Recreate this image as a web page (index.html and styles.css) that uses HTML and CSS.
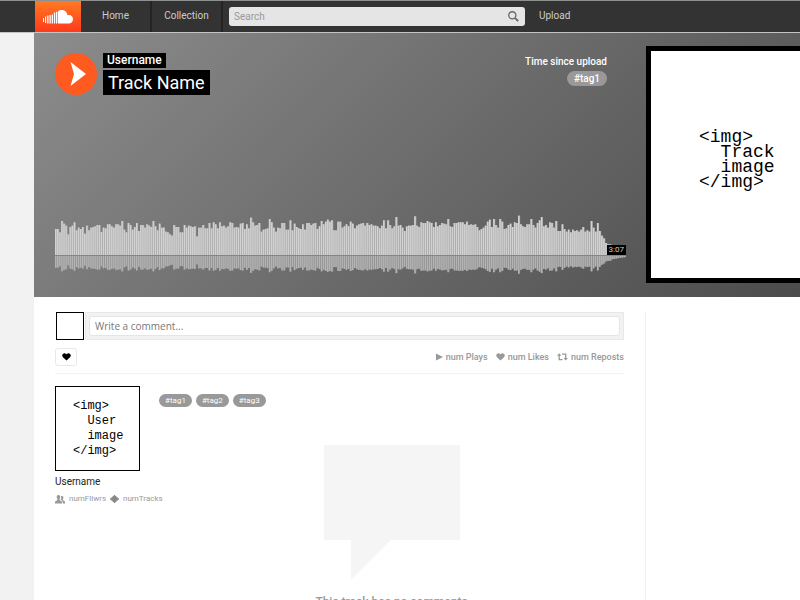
FILE: index.html
```html
<!DOCTYPE html>
<html lang="en">
<head>
<meta charset="utf-8">
<title>Track Name</title>
<link rel="stylesheet" href="styles.css">
</head>
<body>
<header class="topbar">
  <a class="logo" href="#" aria-label="Main page">
    <svg width="30" height="14" viewBox="0 0 30 14" fill="#fff" aria-hidden="true">
      <path d="M15 1.4C16 .5 17.300 0 18.800 0c3 0 5.300 2.200 5.700 5.200.4-.2.9-.3 1.500-.3 2.300 0 4 1.900 4 4.300 0 2.500-1.800 4.300-4 4.300H15z"/>
      <path d="M0 8h1v4H0zM2 6.500h1.200v6.500H2zM4.200 5.500h1.300v8H4.200zM6.500 5h1.300v8.500H6.500zM8.700 4.500h1.300v9H8.700zM10.900 2.500h1.300v11h-1.300zM13 1.700h1.300v11.800H13z"/>
    </svg>
  </a>
  <nav class="nav">
    <a href="#">Home</a>
    <a href="#">Collection</a>
  </nav>
  <form class="search">
    <input type="search" placeholder="Search" aria-label="Search">
    <button type="button" aria-label="Submit search">
      <svg width="11" height="11" viewBox="0 0 12 12" fill="none" stroke="#666" aria-hidden="true"><circle cx="4.700" cy="4.700" r="3.900" stroke-width="1.400"/><path d="M7.500 7.500l3.600 3.500" stroke-width="2"/></svg>
    </button>
  </form>
  <a class="upload" href="#">Upload</a>
</header>

<main class="page">
  <section class="hero">
    <div class="player">
      <div class="player-top">
        <button class="play" type="button" aria-label="Play">
          <svg width="42" height="42" viewBox="0 0 42 42" aria-hidden="true"><circle cx="21" cy="21" r="21" fill="#ff5a1f"/><path d="M15.500 9L31 21 15.500 33l3.500-12z" fill="#fff"/></svg>
        </button>
        <div class="titles">
          <a class="artist" href="#">Username</a>
          <h1 class="track">Track Name</h1>
        </div>
        <div class="meta">
          <span>Time since upload</span>
          <a class="tag tag-hero" href="#">#tag1</a>
        </div>
      </div>
      <div class="wave">
        <svg id="wave" viewBox="0 0 1713 180" preserveAspectRatio="none" aria-hidden="true"></svg>
        <span class="duration">3:07</span>
      </div>
    </div>
    <div class="artwork"><pre>&lt;img&gt;
  Track
  image
&lt;/img&gt;</pre></div>
  </section>

  <div class="content">
    <div class="primary">
      <form class="comment">
        <span class="avatar"></span>
        <div class="comment-box"><input type="text" placeholder="Write a comment..." aria-label="Write a comment"></div>
      </form>
      <div class="actions">
        <button class="like" type="button" aria-label="Like">
          <svg width="9" height="8" viewBox="0 0 10 9" fill="#000" aria-hidden="true"><path d="M5 8.500L1 4.700C-1 2.300 1.200 0 3 .2 4 .3 4.700.9 5 1.600 5.300.9 6 .3 7 .2 8.800 0 11 2.300 9 4.700z"/></svg>
        </button>
        <ul class="stats">
          <li><svg width="7" height="8" viewBox="0 0 7 8" fill="#999" aria-hidden="true"><path d="M0 .5L7 4 0 7.500z"/></svg>num Plays</li>
          <li><svg width="9" height="8" viewBox="0 0 10 9" fill="#999" aria-hidden="true"><path d="M5 8.500L1 4.700C-1 2.300 1.200 0 3 .2 4 .3 4.700.9 5 1.600 5.300.9 6 .3 7 .2 8.800 0 11 2.300 9 4.700z"/></svg>num Likes</li>
          <li><svg width="11" height="8" viewBox="0 0 11 8" aria-hidden="true"><path d="M2.200 2v4.700h3.300M5 1.200h3.700V5.500" fill="none" stroke="#999" stroke-width="1.300"/><path d="M0 2.800L2.200.3 4.400 2.800zM6.500 5h4.400L8.700 7.600z" fill="#999"/></svg>num Reposts</li>
        </ul>
      </div>
      <div class="details">
        <aside class="user">
          <div class="user-image"><pre>&lt;img&gt;
  User
  image
&lt;/img&gt;</pre></div>
          <a class="user-name" href="#">Username</a>
          <div class="user-stats">
            <svg width="10" height="9" viewBox="0 0 10 9" fill="#999" aria-hidden="true"><path d="M3.500 0C5 0 5.500 1.200 5.200 2.600 5 3.800 4.500 4.200 4.500 4.800c0 1 2.500.9 2.500 2.400V8.500H0V7.200c0-1.500 2.500-1.400 2.500-2.400 0-.6-.5-1-.7-2.200C1.500 1.200 2 0 3.500 0z"/><path d="M6 1.200C7.500.4 8.700 1.300 8.400 2.800 8.200 3.800 7.800 4.200 7.800 4.800c0 .8 2.200.9 2.200 2.200v1.500H7.700V7C7.700 5.500 6 5.200 5.700 4.700 6.300 3.800 6.400 2.400 6 1.200z"/></svg>
            <span>numFllwrs</span>
            <svg width="9" height="8" viewBox="0 0 9 8" fill="#888" aria-hidden="true"><path d="M0 3.300h1.300V2.300h1.300V1h1.200V0h1.400v1h1.200v1.300h1.300v1H9v1.400H7.700v1H6.400V7H5.200v1H3.800V7H2.600V5.700H1.300v-1H0z"/></svg>
            <span>numTracks</span>
          </div>
        </aside>
        <div class="feed">
          <div class="tags"><a class="tag" href="#">#tag1</a><a class="tag" href="#">#tag2</a><a class="tag" href="#">#tag3</a></div>
          <div class="empty">
            <svg width="136" height="135" viewBox="0 0 136 135" fill="#f5f5f5" aria-hidden="true"><path d="M0 0h136v95H67L27 135V95H0z"/></svg>
            <p>This track has no comments</p>
          </div>
        </div>
      </div>
    </div>
    <aside class="rail"></aside>
  </div>
</main>
<script src="wave.js"></script>
</body>
</html>
```
FILE: styles.css
```css
* { box-sizing: border-box; }

body {
  margin: 0;
  height: 100vh;
  overflow: hidden;
  display: flex;
  flex-direction: column;
  background: #f2f2f2;
  color: #333;
  font-family: Roboto, "Liberation Sans", sans-serif;
  font-size: 10px;
}

a { color: inherit; text-decoration: none; }
button { padding: 0; border: 0; background: none; }
svg { display: block; flex: none; }
input { font-family: inherit; min-width: 0; }

pre {
  margin: 0;
  color: #000;
  font-family: "Liberation Mono", "DejaVu Sans Mono", monospace;
  line-height: 15px;
}

.topbar {
  flex: none;
  display: flex;
  align-items: stretch;
  height: 33px;
  padding-left: 35px;
  border-top: 1px solid #8c908e;
  border-bottom: 1px solid #c4c4c4;
  background: #333;
  color: #ccc;
}

.logo {
  display: flex;
  align-items: center;
  justify-content: center;
  width: 46px;
  background: linear-gradient(#ff7a22, #ff3a1c);
}

.nav { display: flex; }
.nav a {
  width: 71px;
  border-right: 2px solid #242424;
  line-height: 29px;
  text-align: center;
}

.search {
  display: flex;
  align-items: center;
  flex: 0 1 296px;
  height: 19px;
  margin: 6px 14px 0 6px;
  padding: 0 6px 0 5px;
  border-radius: 3px;
  background: #e5e5e5;
}
.search input {
  flex: 1;
  padding: 0;
  border: 0;
  outline: 0;
  background: none;
  font-size: 10px;
}
.search input::placeholder { color: #999; }

.upload { line-height: 29px; }

.page {
  flex: 1;
  min-height: 0;
  margin-left: 34px;
  background: #fff;
}

.hero {
  display: grid;
  grid-template-columns: minmax(571px, 1fr) 237px;
  gap: 20px;
  overflow: hidden;
  padding: 13px 21px 14px;
  background: linear-gradient(135deg, #8c8c8c, #4c4c4c);
}

.player {
  display: flex;
  flex-direction: column;
  justify-content: space-between;
  padding-top: 7px;
}
.player-top { display: flex; gap: 6px; }
.play { align-self: flex-start; }

.titles {
  display: flex;
  flex-direction: column;
  align-items: flex-start;
  gap: 2px;
  color: #fff;
  font-weight: 500;
}
.artist {
  padding: 0 4px;
  background: #000;
  font-size: 12px;
  line-height: 15px;
}
.track {
  margin: 0;
  padding: 0 5px;
  background: #000;
  font-size: 18px;
  font-weight: 400;
  line-height: 25px;
}

.meta {
  display: flex;
  flex-direction: column;
  align-items: flex-end;
  gap: 2px;
  margin: 1px 19px 0 auto;
  color: #fff;
  font-weight: 500;
  line-height: 15px;
}

.tag {
  padding: 0 6px;
  border-radius: 7px;
  background: #999;
  color: #fff;
  font-size: 8px;
  line-height: 13px;
}
.tag-hero {
  padding: 0 7px;
  border-radius: 8px;
  font-size: 10px;
  line-height: 15px;
}

.wave { position: relative; padding-bottom: 8px; }
.wave svg { width: 100%; height: 60px; }
.duration {
  position: absolute;
  top: 30px;
  right: 0;
  padding: 0 2px;
  background: #000;
  color: #ccc;
  font-size: 8px;
  line-height: 10px;
}

.artwork {
  display: flex;
  align-items: center;
  height: 237px;
  padding: 0 0 10px 48px;
  border: 5px solid #000;
  background: #fff;
}
.artwork pre { font-size: 18px; }

.content { display: flex; padding: 15px 21px 0; }
.primary { flex: 0 1 569px; }
.rail {
  flex: 1;
  margin-left: 21px;
  border-left: 1px solid #f2f2f2;
}

.comment { display: flex; gap: 1px; }
.avatar {
  width: 28px;
  height: 28px;
  margin-left: 1px;
  border: 1px solid #000;
}
.comment-box {
  flex: 1;
  display: flex;
  padding: 3px;
  border: 1px solid #e8e8e8;
  background: #f2f2f2;
}
.comment-box input {
  flex: 1;
  height: 20px;
  padding: 0 5px;
  border: 1px solid #e5e5e5;
  border-radius: 3px;
  outline: 0;
  background: #fff;
  font-family: "Open Sans", sans-serif;
  font-size: 10px;
}
.comment-box input::placeholder { color: #777; }

.actions {
  display: flex;
  align-items: center;
  justify-content: space-between;
  height: 34px;
  border-bottom: 1px solid #f2f2f2;
}
.like {
  display: flex;
  align-items: center;
  justify-content: center;
  width: 22px;
  height: 18px;
  border: 1px solid #e8e8e8;
  border-radius: 3px;
}
.stats {
  display: flex;
  gap: 8px;
  margin: 0;
  padding: 0;
  list-style: none;
  color: #999;
  font-size: 9px;
  font-weight: 500;
}
.stats li { display: flex; align-items: center; gap: 3px; }

.details { display: flex; padding-top: 12px; }
.user { flex: none; width: 104px; white-space: nowrap; }
.user-image {
  width: 85px;
  height: 85px;
  padding: 12px 17px;
  border: 1px solid #000;
}
.user-image pre { font-size: 12px; }
.user-name {
  display: block;
  margin-top: 3px;
  color: #222;
  line-height: 15px;
}
.user-stats {
  display: flex;
  align-items: center;
  gap: 4px;
  margin-top: 4px;
  color: #999;
  font-size: 8px;
  line-height: 12px;
}

.feed { flex: 1; padding-top: 8px; }
.tags { display: flex; gap: 4px; }
.empty {
  display: flex;
  flex-direction: column;
  align-items: center;
  margin-top: 38px;
}
.empty p {
  margin: 13px 0 0;
  color: #999;
  font-size: 12px;
  font-weight: 500;
  line-height: 18px;
}
```
FILE: wave.js
```js
// Top edge of each bar, grouped in three stretches of the track: [start, end, tops]
const parts = [
  [0, 555, [84,94,60,68,74,100,78,74,64,88,80,84,78,98,74,88,80,78,76,72,72,93,80,82,70,70,76,80,70,70,74,60,86,94,66,72,86,78,66,90,72,72,80,70,74,78,60,76,88,68,80,80,92,94,100,104,72,78,78,94,94,72,80,74,76,78,76,106,80,80,72,82,82,66,82,64,70,82,64,76,74,80,76,64,66,80,78,80,68]],
  [555, 1125, [66,80,84,70,82,50,64,74,72,66,92,86,84,82,84,54,64,80,92,80,82,66,66,86,86,58,88,62,68,78,82,84,70,86,66,66,72,68,66,84,70,76,60,70,62,56,62,58,88,88,62,62,80,76,74,70,76,62,68,82,74,70,68,66,74,66,72,52,70,74,74,76,82,74,58,82,58,72,82,76,72,48,74,72,80,90,76,74,74,72,46,74,78,64,64,66,66,60,64]],
  [1125, 1713, [66,78,64,76,72,66,68,70,54,76,78,66,66,64,64,64,66,70,62,72,70,72,70,78,88,84,80,74,62,56,78,54,72,80,54,62,84,82,72,68,78,64,66,76,44,70,76,78,70,70,54,72,80,66,58,48,76,72,80,64,66,80,60,90,90,70,84,92,86,94,66,86,90,88,92,86,78,92,88,92,60,80,92,66,90,104,112,126,130,130,140,142,145,148,150,152,154,156]]
];

const tops = [];
const pitch = 1713 / 275;
for (let i = 0; i < 275; i++) {
  const x = i * pitch;
  const [start, end, list] = parts.find(p => x < p[1]);
  tops.push(list[Math.floor((x - start) / (end - start) * list.length)]);
}

const rect = (x, y, w, h, fill) =>
  `<rect x="${x}" y="${y}" width="${w}" height="${h}" fill="${fill}"/>`;

let out = "";
tops.forEach((top, i) => {
  const x = i * pitch;
  const h = 162 - top;
  const y = 120 - h;
  const low = h * 0.45;
  out += rect(x, y, pitch, h, "#b0b0b0") + rect(x, y, 4, h, "#d2d2d2");
  out += rect(x, 123, pitch, low, "#949494") + rect(x, 123, 4, low, "#b4b4b4");
});
out += rect(0, 120, 1713, 3, "#858585");
document.getElementById("wave").innerHTML = out;
```
